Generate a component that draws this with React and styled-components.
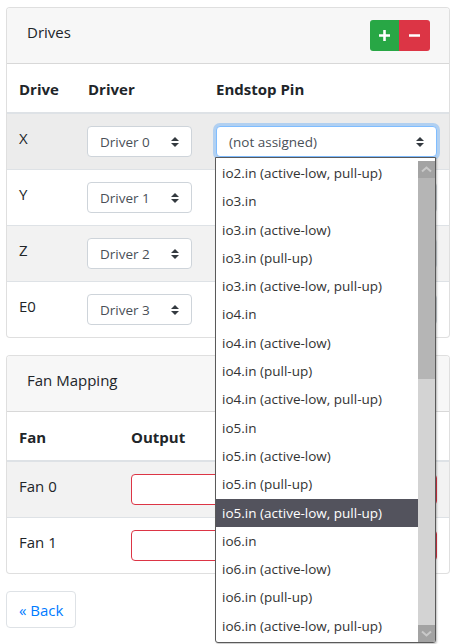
import React from 'react'
import styled, { createGlobalStyle } from 'styled-components'

const GlobalStyle = createGlobalStyle`
  html, body {
    margin: 0;
    padding: 0;
    background: #fff;
  }
  body {
    font-family: "Open Sans", "Noto Sans", "Liberation Sans", sans-serif;
    font-size: 16px;
    line-height: 1.5;
    color: #212529;
  }
`

const Page = styled.div`
  position: relative;
  width: 462px;
  height: 644px;
  overflow: hidden;
  padding: 7px 12px 0 6px;
  box-sizing: border-box;
`

const Card = styled.div`
  border: 1px solid rgba(0, 0, 0, 0.125);
  border-radius: 4px;
  background: #fff;
  overflow: hidden;
  margin-bottom: ${({ gap }) => gap || 0}px;
`

const CardHeader = styled.div`
  display: flex;
  align-items: flex-start;
  justify-content: space-between;
  padding: 12px 19px 12px 20px;
  height: 31px;
  line-height: 24px;
  background: #f7f7f7;
  border-bottom: 1px solid rgba(0, 0, 0, 0.125);
  font-size: 15px;
`

const ButtonGroup = styled.div`
  display: flex;
`

const IconButton = styled.button`
  width: ${({ w }) => w}px;
  height: 31px;
  border: none;
  padding: 0;
  display: flex;
  align-items: center;
  justify-content: center;
  background: ${({ color }) => color};
  border-radius: ${({ first }) => (first ? '3px 0 0 3px' : '0 3px 3px 0')};
`

const Table = styled.table`
  width: 100%;
  border-collapse: collapse;
  table-layout: fixed;
`

const Th = styled.th`
  box-sizing: border-box;
  text-align: left;
  font-weight: 700;
  font-size: 15px;
  padding: 13px 12px 11px;
  line-height: 24px;
  border-bottom: 2px solid #dee2e6;
  width: ${({ w }) => (w ? `${w}px` : 'auto')};
`

const Row = styled.tr`
  background: ${({ bg }) => bg || 'transparent'};
  border-top: 1px solid #dee2e6;
`

const Td = styled.td`
  padding: 12px;
  vertical-align: top;
  line-height: 24px;
  font-size: 15px;
`

const SelectBox = styled.div`
  box-sizing: border-box;
  height: 31px;
  width: ${({ w }) => (w ? `${w}px` : '100%')};
  margin-left: ${({ ml }) => ml || 0}px;
  display: flex;
  align-items: center;
  justify-content: space-between;
  padding: 0 12px;
  font-size: 13.5px;
  color: #495057;
  background: #fff;
  border: 1px solid ${({ focus }) => (focus ? '#80bdff' : '#ced4da')};
  border-radius: 4px;
  box-shadow: ${({ focus }) =>
    focus ? '0 0 0 3px rgba(0, 123, 255, 0.25)' : 'none'};
`

const TextInput = styled.div`
  box-sizing: border-box;
  height: 31px;
  width: 100%;
  border: 1px solid #dc3545;
  border-radius: 4px;
  background: #fff;
`

const BackButton = styled.button`
  margin-top: 17px;
  height: 37px;
  padding: 0 12px;
  font-family: inherit;
  font-size: 15px;
  color: #007bff;
  background: #fff;
  border: 1px solid #dee2e6;
  border-radius: 4px;
`

const Dropdown = styled.div`
  position: absolute;
  left: 215px;
  top: 157px;
  width: 221px;
  height: 486px;
  box-sizing: border-box;
  border: 1px solid #5a5a5a;
  border-radius: 0 0 3px 3px;
  background: #fff;
  display: flex;
  overflow: hidden;
  box-shadow: 1px 1px 2px rgba(0, 0, 0, 0.25);
`

const OptionList = styled.div`
  flex: 1;
  padding-top: 1px;
`

const Option = styled.div`
  height: 28.3px;
  line-height: 28.3px;
  padding-left: 6px;
  font-size: 13.5px;
  white-space: nowrap;
  color: ${({ active }) => (active ? '#fff' : '#333')};
  background: ${({ active }) => (active ? '#53535d' : 'transparent')};
`

const ScrollBar = styled.div`
  width: 17px;
  margin-top: 3px;
  display: flex;
  flex-direction: column;
  background: #d3d3d3;
`

const ScrollArrow = styled.div`
  height: 17px;
  background: #a3a3a3;
  display: flex;
  align-items: center;
  justify-content: center;
`

const ScrollThumb = styled.div`
  height: 201px;
  background: #b5b5b5;
`

const ScrollTrack = styled.div`
  flex: 1;
`

const Arrows = () => (
  <svg width="8" height="10" viewBox="0 0 4 5">
    <path fill="#343a40" d="M2 0L0 2h4zm0 5L0 3h4z" />
  </svg>
)

const Chevron = ({ down }) => (
  <svg width="11" height="7" viewBox="0 0 11 7">
    <path
      d={down ? 'M1 1.5l4.5 4 4.5-4' : 'M1 5.5l4.5-4 4.5 4'}
      fill="none"
      stroke="#c9c9c9"
      strokeWidth="2"
    />
  </svg>
)

const drives = [
  { name: 'X', driver: 'Driver 0', bg: '#ececec' },
  { name: 'Y', driver: 'Driver 1' },
  { name: 'Z', driver: 'Driver 2', bg: '#f2f2f2' },
  { name: 'E0', driver: 'Driver 3' }
]

const options = [
  'io2.in (active-low, pull-up)',
  'io3.in',
  'io3.in (active-low)',
  'io3.in (pull-up)',
  'io3.in (active-low, pull-up)',
  'io4.in',
  'io4.in (active-low)',
  'io4.in (pull-up)',
  'io4.in (active-low, pull-up)',
  'io5.in',
  'io5.in (active-low)',
  'io5.in (pull-up)',
  'io5.in (active-low, pull-up)',
  'io6.in',
  'io6.in (active-low)',
  'io6.in (pull-up)',
  'io6.in (active-low, pull-up)'
]

export default function App() {
  return (
    <Page>
      <GlobalStyle />
      <Card gap={17}>
        <CardHeader>
          <span>Drives</span>
          <ButtonGroup>
            <IconButton first w={29} color="#28a745">
              <svg width="13" height="13" viewBox="0 0 13 13">
                <path d="M6.5 1v11M1 6.5h11" stroke="#fff" strokeWidth="2.6" />
              </svg>
            </IconButton>
            <IconButton w={31} color="#dc3545">
              <svg width="13" height="13" viewBox="0 0 13 13">
                <path d="M1 6.5h11" stroke="#fff" strokeWidth="2.6" />
              </svg>
            </IconButton>
          </ButtonGroup>
        </CardHeader>
        <Table>
          <thead>
            <tr>
              <Th w={69}>Drive</Th>
              <Th w={128}>Driver</Th>
              <Th>Endstop Pin</Th>
            </tr>
          </thead>
          <tbody>
            {drives.map((d, i) => (
              <Row key={d.name} bg={d.bg}>
                <Td>{d.name}</Td>
                <Td>
                  <SelectBox w={105} ml={-1}>
                    {d.driver}
                    <Arrows />
                  </SelectBox>
                </Td>
                <Td>
                  <SelectBox focus={i === 0}>
                    (not assigned)
                    <Arrows />
                  </SelectBox>
                </Td>
              </Row>
            ))}
          </tbody>
        </Table>
      </Card>

      <Card>
        <CardHeader>
          <span>Fan Mapping</span>
        </CardHeader>
        <Table>
          <thead>
            <tr>
              <Th w={112}>Fan</Th>
              <Th>Output</Th>
            </tr>
          </thead>
          <tbody>
            <Row bg="#f2f2f2">
              <Td>Fan 0</Td>
              <Td>
                <TextInput />
              </Td>
            </Row>
            <Row>
              <Td>Fan 1</Td>
              <Td>
                <TextInput />
              </Td>
            </Row>
          </tbody>
        </Table>
      </Card>

      <BackButton>« Back</BackButton>

      <Dropdown>
        <OptionList>
          {options.map((o, i) => (
            <Option key={i} active={i === 12}>
              {o}
            </Option>
          ))}
        </OptionList>
        <ScrollBar>
          <ScrollArrow>
            <Chevron />
          </ScrollArrow>
          <ScrollThumb />
          <ScrollTrack />
          <ScrollArrow>
            <Chevron down />
          </ScrollArrow>
        </ScrollBar>
      </Dropdown>
    </Page>
  )
}
